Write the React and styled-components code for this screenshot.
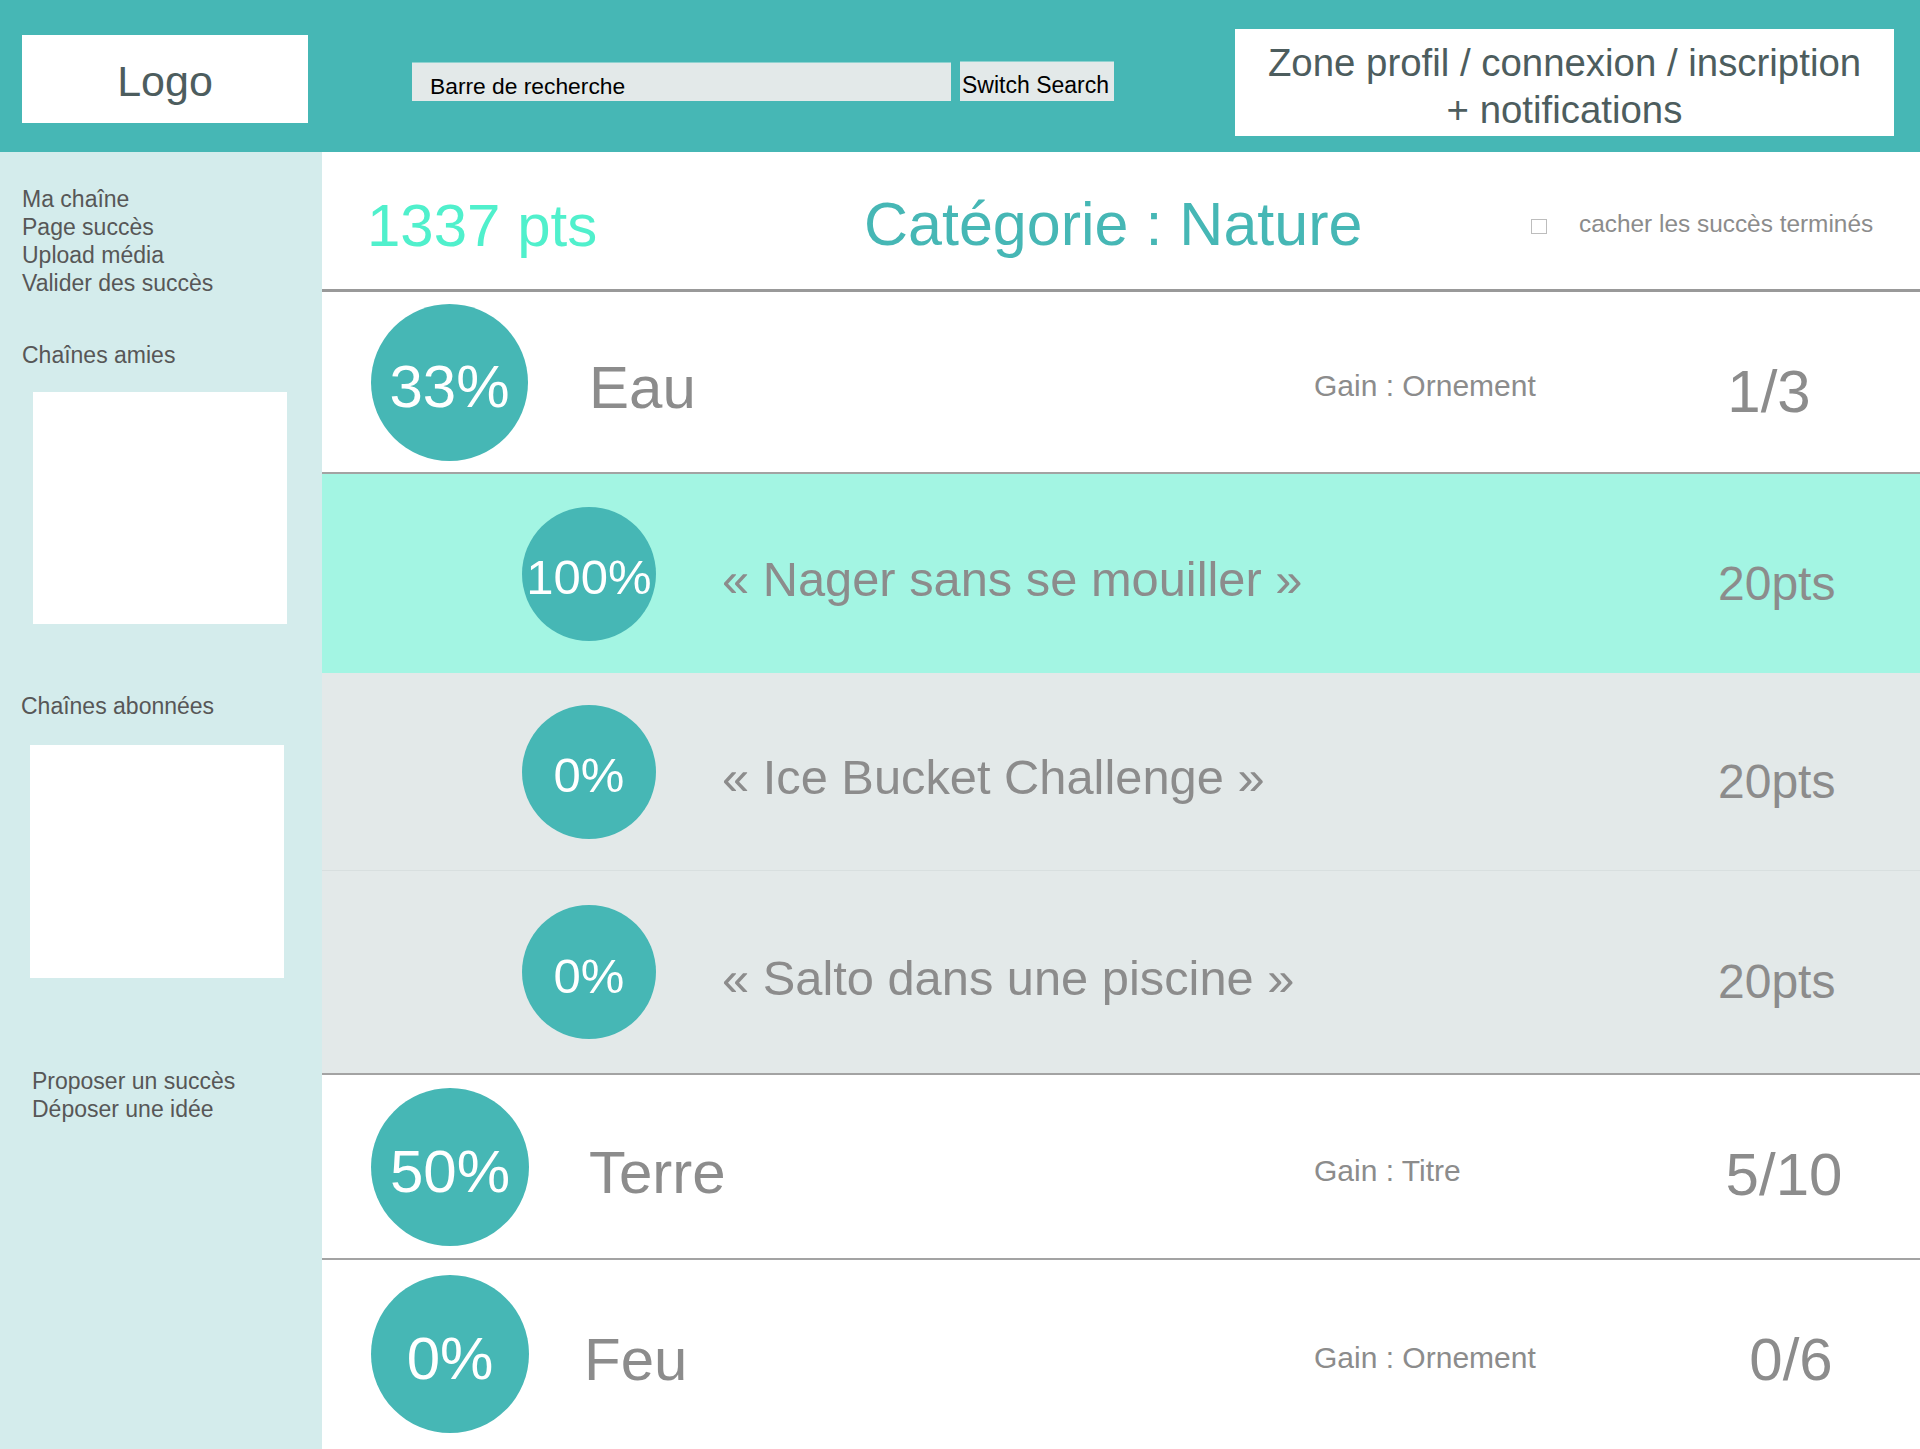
import React from "react";
import styled, { createGlobalStyle } from "styled-components";

const GlobalStyle = createGlobalStyle`
  html, body { margin: 0; padding: 0; }
  body {
    font-family: "Liberation Sans", Arial, Helvetica, sans-serif;
    background: #ffffff;
  }
  *, *::before, *::after { box-sizing: border-box; }
`;

const TEAL = "#46b7b5";
const GRAY_TEXT = "#8c8c8c";

const Page = styled.div`
  width: 1920px;
  min-height: 1449px;
  display: flex;
  flex-direction: column;
`;

const TopBar = styled.header`
  height: 152px;
  flex: none;
  background: ${TEAL};
  display: flex;
  align-items: flex-start;
  padding-left: 22px;
`;

const LogoBox = styled.div`
  width: 286px;
  height: 88px;
  margin-top: 35px;
  background: #ffffff;
  display: flex;
  align-items: center;
  justify-content: center;
  padding-top: 4px;
  font-size: 43px;
  color: #4d5d5e;
`;

const SearchInput = styled.div`
  width: 539px;
  height: 39px;
  margin-top: 62px;
  margin-left: 104px;
  background: #e3e9e9;
  border-top: 1px solid #8fd2d0;
  display: flex;
  align-items: flex-end;
  padding: 0 0 3px 18px;
  font-size: 22.8px;
  line-height: 1;
  color: #000000;
`;

const SearchButton = styled.div`
  width: 154px;
  height: 40px;
  margin-top: 61px;
  margin-left: 9px;
  background: #e3e9e9;
  border-top: 1px solid #8fd2d0;
  display: flex;
  align-items: flex-end;
  padding: 0 0 4px 2px;
  font-size: 23px;
  line-height: 1;
  color: #000000;
  white-space: nowrap;
`;

const ProfileBox = styled.div`
  width: 659px;
  height: 107px;
  margin-top: 29px;
  margin-left: 121px;
  background: #ffffff;
  display: flex;
  flex-direction: column;
  align-items: center;
  justify-content: center;
  padding-top: 6px;
  font-size: 38.4px;
  line-height: 47px;
  color: #4d5d5e;
  text-align: center;
  white-space: nowrap;
`;

const Body = styled.div`
  flex: 1;
  display: grid;
  grid-template-columns: 322px 1fr;
`;

const Sidebar = styled.aside`
  background: #d4ecec;
  padding-top: 33px;
  display: flex;
  flex-direction: column;
  align-items: flex-start;
`;

const LinkList = styled.div`
  display: flex;
  flex-direction: column;
  margin-top: ${(p) => p.$top || 0}px;
  padding-left: ${(p) => p.$left}px;
  font-size: 23px;
  line-height: 28px;
  color: #575757;
`;

const SideTitle = styled.div`
  margin-top: ${(p) => p.$top}px;
  padding-left: ${(p) => p.$left}px;
  font-size: 23px;
  line-height: 28px;
  color: #575757;
`;

const ChannelBox = styled.div`
  width: 254px;
  height: ${(p) => p.$h}px;
  margin-top: ${(p) => p.$top}px;
  margin-left: ${(p) => p.$left}px;
  background: #ffffff;
`;

const Main = styled.main`
  display: flex;
  flex-direction: column;
  background: #ffffff;
`;

const ScoreBar = styled.div`
  height: 140px;
  display: grid;
  grid-template-columns: 497px 667px 1fr;
  align-items: center;
  padding-left: 45px;
  border-bottom: 3px solid #999999;
`;

const Points = styled.div`
  font-size: 60px;
  line-height: 1;
  padding-top: 10px;
  color: #50f0cc;
  white-space: nowrap;
`;

const CategoryTitle = styled.h1`
  margin: 0;
  font-weight: normal;
  font-size: 61px;
  line-height: 1;
  padding-top: 8px;
  color: ${TEAL};
  white-space: nowrap;
`;

const Filter = styled.label`
  display: flex;
  align-items: center;
  gap: 32px;
  padding-top: 8px;
  font-size: 24.4px;
  line-height: 1;
  color: ${GRAY_TEXT};
  white-space: nowrap;
`;

const CheckBox = styled.span`
  width: 16px;
  height: 15px;
  border: 1px solid #bdbdbd;
  background: #ffffff;
  margin-top: 4px;
`;

const GroupRow = styled.div`
  height: ${(p) => p.$h}px;
  display: grid;
  grid-template-columns: 157px 1fr 376px 180px;
  align-items: center;
  padding: 0 50px 0 49px;
  border-bottom: ${(p) => (p.$last ? "none" : "2px solid #a3a3a3")};
`;

const Badge = styled.div`
  width: ${(p) => p.$size}px;
  height: ${(p) => p.$size}px;
  border-radius: 50%;
  background: ${TEAL};
  color: #ffffff;
  display: flex;
  align-items: center;
  justify-content: center;
  font-size: ${(p) => p.$font}px;
  line-height: 1;
  padding-top: ${(p) => p.$shift}px;
  white-space: nowrap;
`;

const GroupName = styled.div`
  margin-left: ${(p) => p.$indent || 61}px;
  font-size: 60px;
  line-height: 1;
  padding-top: 12px;
  color: ${GRAY_TEXT};
`;

const Gain = styled.div`
  font-size: 30px;
  line-height: 1;
  padding-top: 8px;
  color: ${GRAY_TEXT};
  white-space: nowrap;
`;

const Count = styled.div`
  font-size: 60px;
  line-height: 1;
  padding-top: ${(p) => p.$shift}px;
  padding-left: ${(p) => Math.max(0, p.$dx * 2)}px;
  padding-right: ${(p) => Math.max(0, -p.$dx * 2)}px;
  color: ${GRAY_TEXT};
  text-align: center;
`;

const ItemRow = styled.div`
  height: ${(p) => p.$h}px;
  display: grid;
  grid-template-columns: 134px 1fr 140px;
  align-items: center;
  padding: 0 62px 0 200px;
  background: ${(p) => (p.$done ? "#a3f5e3" : "#e3e9e9")};
  border-top: ${(p) => (p.$sep ? "1px solid #d8dfdf" : "none")};
  border-bottom: ${(p) => (p.$end ? "2px solid #a3a3a3" : "none")};
`;

const ItemTitle = styled.div`
  margin-left: 66px;
  font-size: 48.8px;
  line-height: 1;
  padding-top: 12px;
  color: ${GRAY_TEXT};
  white-space: nowrap;
`;

const ItemPoints = styled.div`
  font-size: 48px;
  line-height: 1;
  padding-top: 20px;
  color: ${GRAY_TEXT};
  white-space: nowrap;
`;

const items = [
  { pct: "100%", title: "« Nager sans se mouiller »", pts: "20pts", done: true, h: 199 },
  { pct: "0%", title: "« Ice Bucket Challenge »", pts: "20pts", h: 197 },
  { pct: "0%", title: "« Salto dans une piscine »", pts: "20pts", h: 205, sep: true, end: true },
];

export default function App() {
  return (
    <Page>
      <GlobalStyle />
      <TopBar>
        <LogoBox>Logo</LogoBox>
        <SearchInput>Barre de recherche</SearchInput>
        <SearchButton>Switch Search</SearchButton>
        <ProfileBox>
          <span>Zone profil / connexion / inscription</span>
          <span>+ notifications</span>
        </ProfileBox>
      </TopBar>
      <Body>
        <Sidebar>
          <LinkList $left={22}>
            <span>Ma chaîne</span>
            <span>Page succès</span>
            <span>Upload média</span>
            <span>Valider des succès</span>
          </LinkList>
          <SideTitle $top={44} $left={22}>Chaînes amies</SideTitle>
          <ChannelBox $top={23} $left={33} $h={232} />
          <SideTitle $top={68} $left={21}>Chaînes abonnées</SideTitle>
          <ChannelBox $top={25} $left={30} $h={233} />
          <LinkList $top={89} $left={32}>
            <span>Proposer un succès</span>
            <span>Déposer une idée</span>
          </LinkList>
        </Sidebar>
        <Main>
          <ScoreBar>
            <Points>1337 pts</Points>
            <CategoryTitle>Catégorie : Nature</CategoryTitle>
            <Filter>
              <CheckBox />
              <span>cacher les succès terminés</span>
            </Filter>
          </ScoreBar>

          <GroupRow $h={182}>
            <Badge $size={157} $font={60} $shift={10}>33%</Badge>
            <GroupName>Eau</GroupName>
            <Gain>Gain : Ornement</Gain>
            <Count $shift={20} $dx={-11}>1/3</Count>
          </GroupRow>

          {items.map((it) => (
            <ItemRow key={it.title} $h={it.h} $done={it.done} $sep={it.sep} $end={it.end}>
              <Badge $size={134} $font={49} $shift={8}>{it.pct}</Badge>
              <ItemTitle>{it.title}</ItemTitle>
              <ItemPoints>{it.pts}</ItemPoints>
            </ItemRow>
          ))}

          <GroupRow $h={185}>
            <Badge $size={158} $font={60} $shift={10}>50%</Badge>
            <GroupName>Terre</GroupName>
            <Gain>Gain : Titre</Gain>
            <Count $shift={16} $dx={4}>5/10</Count>
          </GroupRow>

          <GroupRow $h={188} $last>
            <Badge $size={158} $font={60} $shift={10}>0%</Badge>
            <GroupName $indent={56}>Feu</GroupName>
            <Gain>Gain : Ornement</Gain>
            <Count $shift={12} $dx={11}>0/6</Count>
          </GroupRow>
        </Main>
      </Body>
    </Page>
  );
}
